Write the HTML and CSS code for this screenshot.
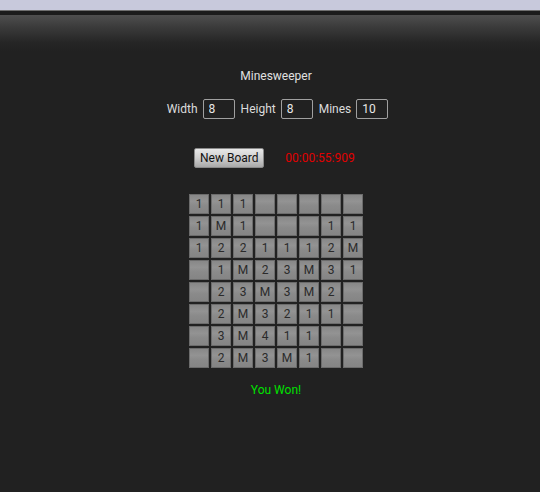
FILE: index.html
```html
<!DOCTYPE html>
<html>
<head>
<meta charset="utf-8">
<link rel="stylesheet" href="styles.css">
</head>
<body>
<div class="topbar"><div class="lav"></div><div class="line"></div><div class="dark"></div><div class="grad"></div></div>
<main class="app">
  <h1 class="title">Minesweeper</h1>
  <div class="settings">
    <label class="lbl">Width</label><input class="num" type="text" value="8">
    <label class="lbl">Height</label><input class="num" type="text" value="8">
    <label class="lbl">Mines</label><input class="num" type="text" value="10">
  </div>
  <div class="controls">
    <button class="btn">New Board</button>
    <span class="timer">00:00:55:909</span>
  </div>
  <div class="board">
    <div class="cell">1</div><div class="cell">1</div><div class="cell">1</div><div class="cell"></div><div class="cell"></div><div class="cell"></div><div class="cell"></div><div class="cell"></div>
    <div class="cell">1</div><div class="cell">M</div><div class="cell">1</div><div class="cell"></div><div class="cell"></div><div class="cell"></div><div class="cell">1</div><div class="cell">1</div>
    <div class="cell">1</div><div class="cell">2</div><div class="cell">2</div><div class="cell">1</div><div class="cell">1</div><div class="cell">1</div><div class="cell">2</div><div class="cell">M</div>
    <div class="cell"></div><div class="cell">1</div><div class="cell">M</div><div class="cell">2</div><div class="cell">3</div><div class="cell">M</div><div class="cell">3</div><div class="cell">1</div>
    <div class="cell"></div><div class="cell">2</div><div class="cell">3</div><div class="cell">M</div><div class="cell">3</div><div class="cell">M</div><div class="cell">2</div><div class="cell"></div>
    <div class="cell"></div><div class="cell">2</div><div class="cell">M</div><div class="cell">3</div><div class="cell">2</div><div class="cell">1</div><div class="cell">1</div><div class="cell"></div>
    <div class="cell"></div><div class="cell">3</div><div class="cell">M</div><div class="cell">4</div><div class="cell">1</div><div class="cell">1</div><div class="cell"></div><div class="cell"></div>
    <div class="cell"></div><div class="cell">2</div><div class="cell">M</div><div class="cell">3</div><div class="cell">M</div><div class="cell">1</div><div class="cell"></div><div class="cell"></div>
  </div>
  <div class="status">You Won!</div>
</main>
</body>
</html>
```

FILE: styles.css
```css
html, body {
  margin: 0;
  padding: 0;
  background: #212121;
  height: 100%;
  overflow: hidden;
}
body {
  font-family: Roboto, "Liberation Sans", sans-serif;
  font-size: 12px;
  color: #dcdcdc;
}
.topbar .lav { height: 10px; background: #c8c9dc; }
.topbar .line { height: 1px; background: #6e6e6e; }
.topbar .dark { height: 4px; background: #1b1b1b; }
.topbar .grad { height: 36px; background: linear-gradient(#4e4e4e, #3a3a3a 35%, #262626 75%, #212121); }
.app {
  padding-left: 12px;
  display: flex;
  flex-direction: column;
  align-items: center;
}
.title {
  margin: 17px 0 0;
  font-size: 12px;
  font-weight: normal;
  line-height: 16px;
  color: #e0e0e0;
}
.settings {
  margin-top: 15px;
  margin-left: 4px;
  display: flex;
  align-items: center;
  gap: 5px;
  height: 20px;
}
.lbl { color: #dcdcdc; }
.num {
  box-sizing: border-box;
  width: 32px;
  height: 20px;
  margin-right: 1px;
  padding: 0 5px;
  background: #212121;
  border: 1px solid #a0a0a0;
  border-radius: 2px;
  color: #e8e8e8;
  font-family: inherit;
  font-size: 12px;
}
.controls {
  margin-top: 29px;
  display: flex;
  align-items: center;
  gap: 21px;
  margin-left: -3px;
}
.btn {
  box-sizing: border-box;
  width: 70px;
  height: 20px;
  padding: 0;
  border: 1px solid #8a8a8a;
  border-radius: 2px;
  background: linear-gradient(#e8e8e8, #cfcfcf 50%, #a9a9a9);
  color: #111;
  font-family: inherit;
  font-size: 12px;
}
.timer { color: #e00000; font-size: 12px; }
.board {
  margin-top: 26px;
  display: grid;
  grid-template-columns: repeat(8, 20px);
  grid-auto-rows: 20px;
  gap: 2px;
}
.cell {
  box-sizing: border-box;
  border: 1px solid #6c6c6c;
  background: linear-gradient(#888, #939393 35%, #8a8a8a 60%, #858585);
  color: #2a2a2a;
  font-size: 12px;
  display: flex;
  align-items: center;
  justify-content: center;
}
.status {
  margin-top: 15px;
  color: #00e000;
  font-size: 12px;
}
```
